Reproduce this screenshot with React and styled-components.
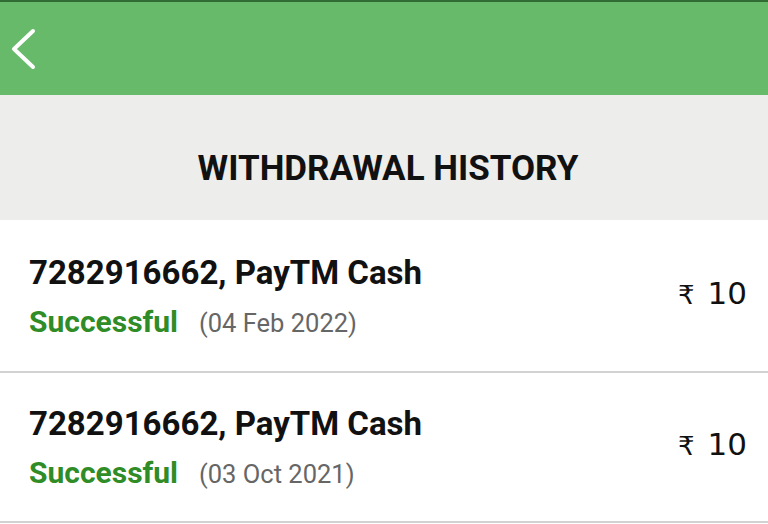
import React from 'react';
import styled, { createGlobalStyle } from 'styled-components';

const GlobalStyle = createGlobalStyle`
  body {
    margin: 0;
    background: #ffffff;
    font-family: Roboto, 'Noto Sans', sans-serif;
  }
`;

const Page = styled.div`
  width: 768px;
  display: flex;
  flex-direction: column;
`;

const TopBar = styled.div`
  height: 93px;
  border-top: 2px solid #2f6b32;
  background: #66ba69;
  display: flex;
  align-items: center;
  padding-left: 10px;
`;

const BackButton = styled.button`
  border: none;
  background: transparent;
  padding: 0;
  display: flex;
  cursor: pointer;
`;

const TitleBar = styled.div`
  height: 125px;
  box-sizing: border-box;
  padding: 21px 0 0 8px;
  background: #ededeb;
  display: flex;
  align-items: center;
  justify-content: center;
`;

const Title = styled.h1`
  margin: 0;
  font-size: 35px;
  font-weight: 700;
  color: #111111;
`;

const Row = styled.div`
  height: ${(props) => props.height}px;
  border-bottom: 2px solid #d2d2d2;
  display: flex;
  align-items: center;
  justify-content: space-between;
  padding: 0 21px 0 29px;
`;

const Info = styled.div`
  display: flex;
  flex-direction: column;
  margin-top: 4px;
`;

const Account = styled.div`
  font-size: 33px;
  font-weight: 700;
  line-height: 49px;
  color: #111111;
`;

const StatusLine = styled.div`
  display: flex;
  align-items: baseline;
  line-height: 49px;
`;

const Status = styled.span`
  font-size: 30px;
  font-weight: 700;
  color: #2f8c27;
`;

const DateText = styled.span`
  margin-left: 21px;
  font-size: 25.5px;
  color: #666666;
`;

const Amount = styled.div`
  display: flex;
  align-items: baseline;
  font-family: 'DejaVu Sans', sans-serif;
  font-size: 31px;
  color: #111111;
  margin-top: -6px;
`;

const Rupee = styled.span`
  font-size: 26px;
  margin-right: 13px;
`;

const withdrawals = [
  { id: 1, account: '7282916662, PayTM Cash', status: 'Successful', date: '04 Feb 2022', amount: 10, height: 151 },
  { id: 2, account: '7282916662, PayTM Cash', status: 'Successful', date: '03 Oct 2021', amount: 10, height: 148 },
];

const App = () => {
  return (
    <>
      <GlobalStyle />
      <Page>
        <TopBar>
          <BackButton aria-label='Back'>
            <svg width='30' height='44' viewBox='0 0 30 44'>
              <path d='M23 4 L4 22 L23 40' fill='none' stroke='#ffffff' strokeWidth='4' strokeLinecap='round' strokeLinejoin='round' />
            </svg>
          </BackButton>
        </TopBar>
        <TitleBar>
          <Title>WITHDRAWAL HISTORY</Title>
        </TitleBar>
        {withdrawals.map((item) => (
          <Row key={item.id} height={item.height}>
            <Info>
              <Account>{item.account}</Account>
              <StatusLine>
                <Status>{item.status}</Status>
                <DateText>({item.date})</DateText>
              </StatusLine>
            </Info>
            <Amount>
              <Rupee>₹</Rupee>
              {item.amount}
            </Amount>
          </Row>
        ))}
      </Page>
    </>
  );
};

export default App;
